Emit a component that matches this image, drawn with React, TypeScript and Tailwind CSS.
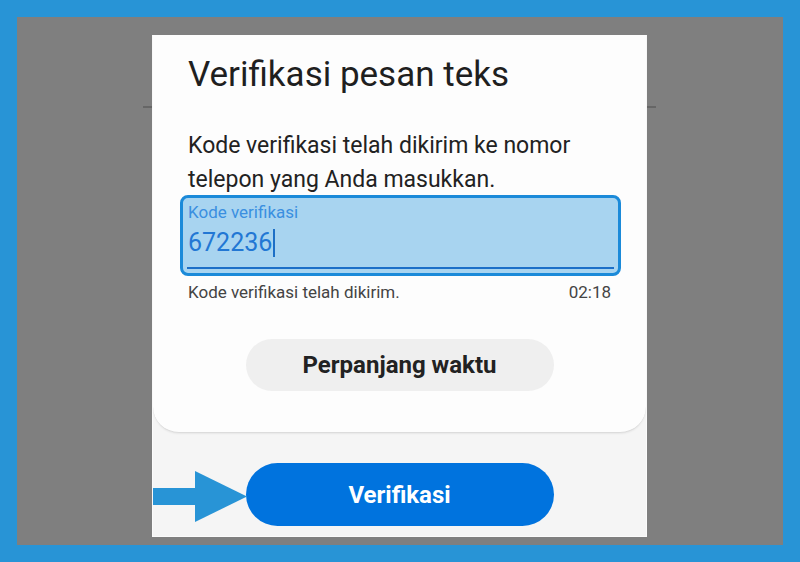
import React from 'react';

const font = { fontFamily: 'Roboto, "Noto Sans", "Liberation Sans", sans-serif' };

function Arrow() {
    return (
        <svg className="absolute left-0 top-[436px]" width="95" height="52" viewBox="0 0 95 52">
            <rect x="0" y="17" width="44" height="17" fill="#2894d6" />
            <polygon points="42,0 94,25.5 42,51" fill="#2894d6" />
        </svg>
    );
}

export default function App() {
    return (
        <div className="w-[800px] h-[562px] bg-[#2894d6] p-[17px]" style={font}>
            <div className="w-full h-full bg-[#7f7f7f] pl-[126px] pt-[18px]">
                <div className="flex items-start">
                    {/* bits of the page behind the dialog */}
                    <div className="w-[9px] h-[2px] mt-[71px] bg-[#666666]" />

                    <div className="relative w-[495px] h-[502px] bg-[#f5f5f5] flex flex-col border-x border-b border-[#fbfbfb]">
                        <div className="h-[398px] bg-[#fdfdfd] rounded-b-[26px] border-b border-[#dcdcdc] shadow-[0_1px_2px_rgba(0,0,0,0.06)] px-[27px] pt-[19px] flex flex-col">
                            <h1 className="pl-[8px] text-[35px] leading-[41px] font-normal text-[#1f1f1f]">Verifikasi pesan teks</h1>

                            <p className="pl-[8px] mt-[34px] text-[23px] leading-[34px] text-[#222222]">
                                Kode verifikasi telah dikirim ke nomor
                                <br />
                                telepon yang Anda masukkan.
                            </p>

                            <div className="mt-[-2px] h-[81px] w-[441px] border-[3px] border-[#1b8ad9] rounded-[8px] bg-[#a8d4f0] px-[4px] pt-[4px] flex flex-col">
                                <div className="pl-[1px] text-[17px] leading-[20px] text-[#3a8fe0]">Kode verifikasi</div>
                                <div className="pl-[1px] mt-[6px] text-[25px] leading-[30px] text-[#2277d4] flex items-center">
                                    <span>672236</span>
                                    <span className="ml-[1px] w-[1.5px] h-[28px] bg-[#1d6fc6]" />
                                </div>
                                <div className="mt-auto mb-[4px] h-[2px] bg-[#1c6fc8]" />
                            </div>

                            <div className="mt-[6px] pl-[8px] pr-[8px] flex justify-between text-[17px] leading-[20px] text-[#444444]">
                                <span>Kode verifikasi telah dikirim.</span>
                                <span>02:18</span>
                            </div>

                            <div className="mt-[37px] flex justify-center">
                                <button className="w-[308px] h-[52px] rounded-full bg-[#efefef] text-[24px] font-bold text-[#222222]">
                                    Perpanjang waktu
                                </button>
                            </div>
                        </div>

                        <div className="mt-[30px] flex justify-center">
                            <button className="w-[308px] h-[63px] rounded-full bg-[#0073de] text-[24px] font-bold text-white">
                                Verifikasi
                            </button>
                        </div>

                        <Arrow />
                    </div>

                    <div className="w-[9px] h-[2px] mt-[71px] bg-[#666666]" />
                </div>
            </div>
        </div>
    );
}
